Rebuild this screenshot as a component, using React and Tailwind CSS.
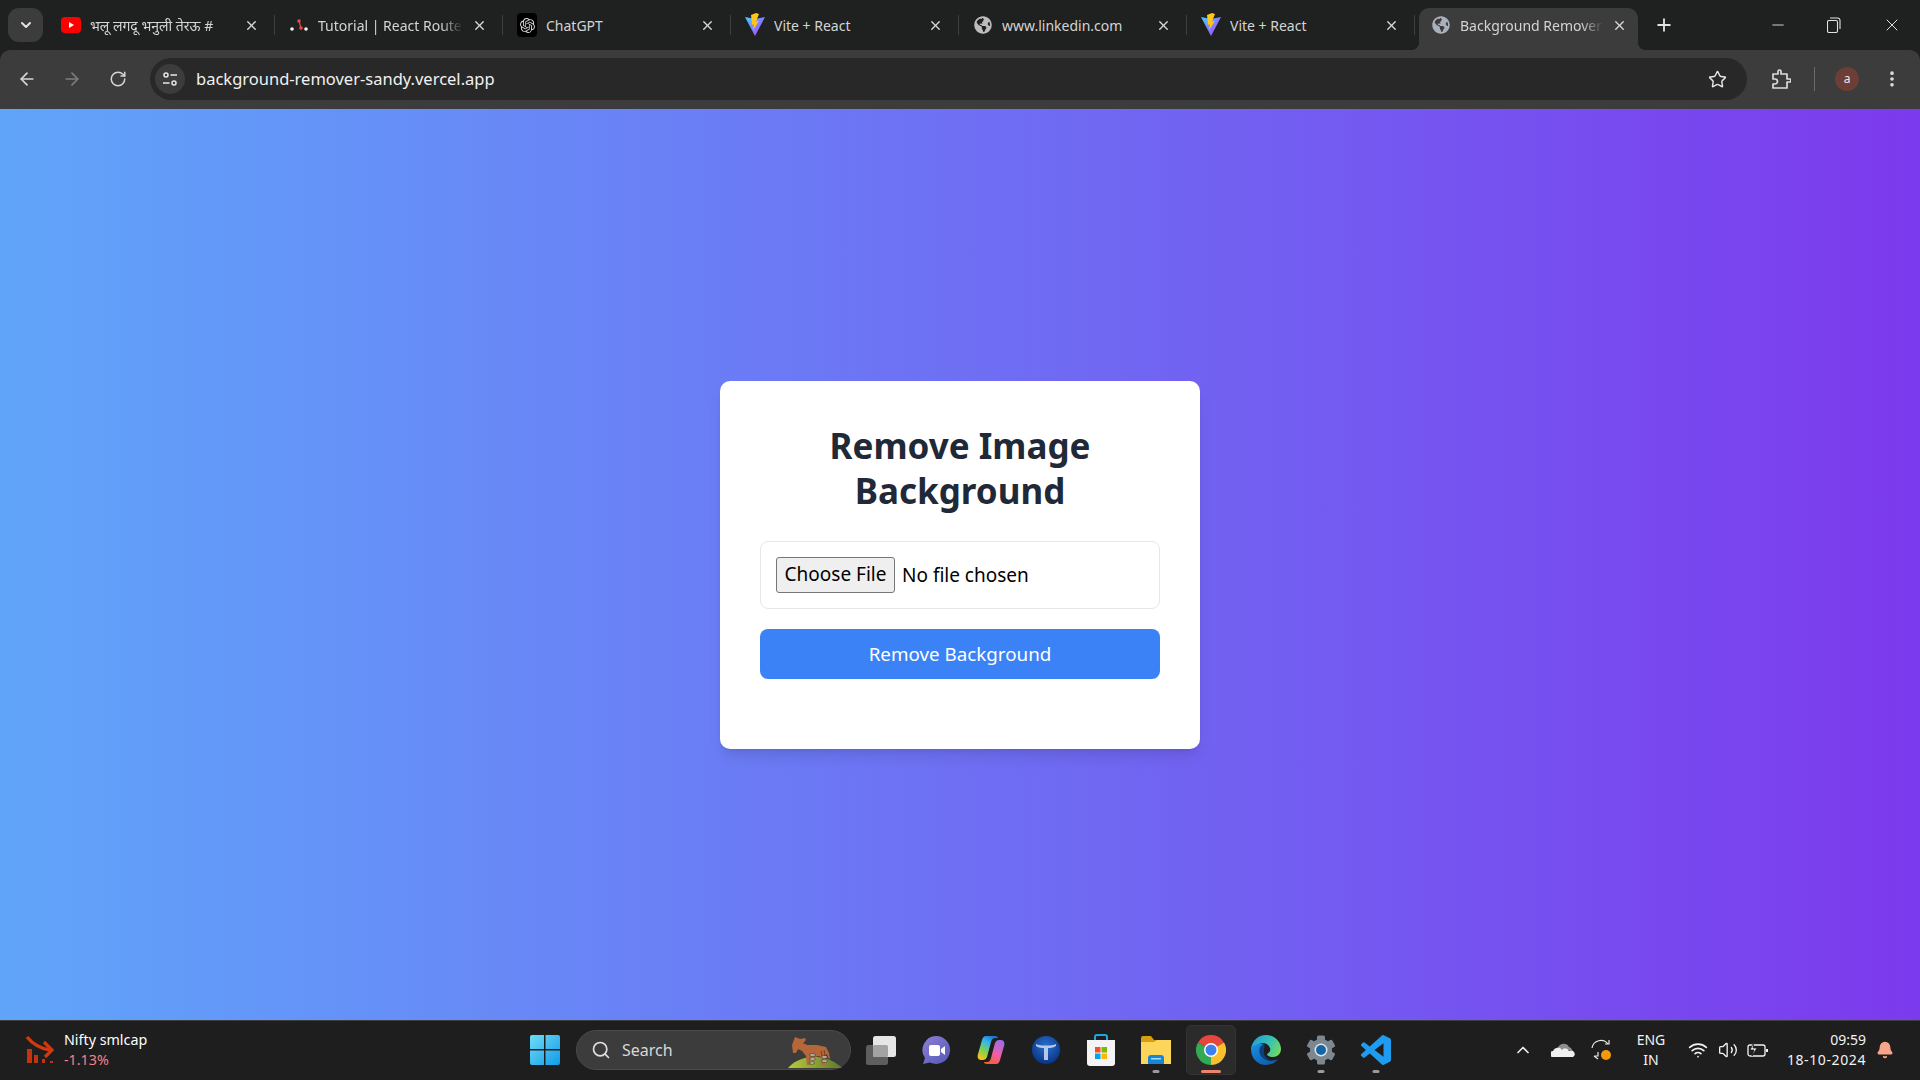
import { ArrowLeft, ArrowRight, RotateCw, Star, X, Plus, ChevronDown, ChevronUp, Minus, Search, Wifi, Volume2, Bell, EllipsisVertical } from 'lucide-react';
import { FaGlobeAmericas } from 'react-icons/fa';
import { SiOpenai } from 'react-icons/si';

const YoutubeIcon = () => (
  <svg width="20" height="16" viewBox="0 0 20 16">
    <rect width="20" height="16" rx="4" fill="#f00" />
    <path d="M8 5l5 3-5 3z" fill="#fff" />
  </svg>
);

const RouterIcon = () => (
  <svg width="18" height="12" viewBox="0 0 18 12">
    <circle cx="2" cy="10" r="1.8" fill="#f4f4f4" />
    <circle cx="16" cy="10" r="1.8" fill="#f4f4f4" />
    <circle cx="9" cy="2" r="1.8" fill="#e94949" />
    <circle cx="11" cy="9" r="1.8" fill="#e94949" />
    <path d="M9 2l2 7M7 10" stroke="#e94949" strokeWidth="1.2" />
  </svg>
);

const GptIcon = () => (
  <span className="w-[20px] h-[24px] rounded-[4px] bg-black flex items-center justify-center text-[#d8d8d8]">
    <SiOpenai size={15} />
  </span>
);

const ViteIcon = () => (
  <svg width="20" height="24" viewBox="0 0 20 24">
    <defs>
      <linearGradient id="viteBody" x1="0" y1="0" x2="1" y2="1">
        <stop offset="0" stopColor="#41d1ff" />
        <stop offset="1" stopColor="#bd34fe" />
      </linearGradient>
    </defs>
    <path d="M0 4l10 2 10-2-10 19z" fill="url(#viteBody)" />
    <path d="M11 0L6 2l1 10 2-1-1 6 6-9-3 .5L14 1z" fill="#ffc517" />
  </svg>
);

const Globe = ({ color = 'text-[#bdbdbd]' }) => (
  <span className={color}>
    <FaGlobeAmericas size={18} />
  </span>
);

const tabs = [
  { title: 'भलू लगदू भनुली तेरऊ #', icon: <YoutubeIcon />, fade: true },
  { title: 'Tutorial | React Router', icon: <RouterIcon />, fade: true },
  { title: 'ChatGPT', icon: <GptIcon /> },
  { title: 'Vite + React', icon: <ViteIcon /> },
  { title: 'www.linkedin.com', icon: <Globe /> },
  { title: 'Vite + React', icon: <ViteIcon /> },
  { title: 'Background Remover', icon: <Globe color="text-[#a9b1bb]" />, fade: true, active: true },
];

const Tab = ({ tab, last }) => (
  <>
    <div className={tab.active ? 'w-[227px] h-[50px] pt-[8px] px-[4px] shrink-0' : 'w-[227px] h-[50px] pt-[8px] shrink-0'}>
      <div className={tab.active
        ? 'relative h-[42px] flex items-center pb-[8px] pl-[12px] pr-[11px] bg-[#3c3c3c] rounded-t-[10px]'
        : 'h-[42px] flex items-center pb-[8px] pl-[14px] pr-[15px]'}>
        {tab.active && (
          <>
            <span className="absolute -left-[8px] bottom-0 w-[8px] h-[8px] bg-[radial-gradient(circle_at_0_0,transparent_8px,#3c3c3c_8px)]" />
            <span className="absolute -right-[8px] bottom-0 w-[8px] h-[8px] bg-[radial-gradient(circle_at_100%_0,transparent_8px,#3c3c3c_8px)]" />
          </>
        )}
        <span className="w-[20px] h-[24px] flex items-center justify-center shrink-0">{tab.icon}</span>
        <span className={tab.fade
          ? 'ml-[9px] flex-1 min-w-0 whitespace-nowrap overflow-hidden text-[14px] text-[#d4d4d4] [mask-image:linear-gradient(to_right,black_85%,transparent)]'
          : 'ml-[9px] flex-1 min-w-0 whitespace-nowrap overflow-hidden text-[14px] text-[#d4d4d4]'}>
          {tab.title}
        </span>
        <X size={15} strokeWidth={2.2} className="ml-[9px] text-[#d8d8d8] shrink-0" />
      </div>
    </div>
    {!last && <div className={tab.active ? 'w-[1px] shrink-0' : 'w-[1px] h-[20px] mt-[15px] bg-[#3d3f3e] shrink-0'} />}
  </>
);

const TabBar = () => (
  <div className="h-[50px] bg-[#1f2120] flex items-start">
    <div className="ml-[8px] mt-[8px] w-[35px] h-[34px] rounded-[11px] bg-[#3c3c3c] flex items-center justify-center shrink-0">
      <ChevronDown size={16} strokeWidth={3} className="text-[#e2e2e2]" />
    </div>
    <div className="ml-[4px] flex">
      {tabs.map((tab, i) => (
        <Tab key={i} tab={tab} last={i === tabs.length - 1} />
      ))}
    </div>
    <Plus size={20} strokeWidth={2.2} className="ml-[12px] mt-[15px] text-[#e2e2e2] shrink-0" />
    <Minus size={18} strokeWidth={1.2} className="ml-[95px] mt-[16px] text-[#e2e2e2] shrink-0" />
    <svg width="14" height="16" viewBox="0 0 14 16" className="ml-[40px] mt-[17px] shrink-0 text-[#e2e2e2]" fill="none" stroke="currentColor" strokeWidth="1.1">
      <rect x="0.5" y="3.5" width="10" height="12" rx="1.5" />
      <path d="M3 1h7.5A2.5 2.5 0 0 1 13 3.500V12" />
    </svg>
    <X size={20} strokeWidth={1.2} className="ml-[41px] mt-[15px] text-[#e2e2e2] shrink-0" />
  </div>
);

const Toolbar = () => (
  <div className="h-[59px] pb-[1px] bg-[#3c3c3c] rounded-t-[10px] flex items-center">
    <div className="ml-[9px] w-[36px] flex justify-center"><ArrowLeft size={20} strokeWidth={2} className="text-[#d6d6d6]" /></div>
    <div className="ml-[9px] w-[36px] flex justify-center"><ArrowRight size={20} strokeWidth={2} className="text-[#7d7d7d]" /></div>
    <div className="ml-[10px] w-[36px] flex justify-center"><RotateCw size={18} strokeWidth={2} className="text-[#d6d6d6]" /></div>
    <div className="ml-[14px] flex-1 h-[42px] rounded-full bg-[#282828] flex items-center pl-[5px] pr-[20px]">
      <span className="w-[30px] h-[30px] rounded-full bg-[#3c3c3c] flex items-center justify-center shrink-0">
        <svg width="16" height="16" viewBox="0 0 16 16" fill="none" stroke="#e6e6e6" strokeWidth="1.5">
          <circle cx="4" cy="4" r="2" />
          <path d="M8.500 4H15M1 12h6.500" />
          <circle cx="12" cy="12" r="2" />
        </svg>
      </span>
      <span className="ml-[11px] flex-1 text-[16.500px] text-[#f1f1f1] whitespace-nowrap">background-remover-sandy.vercel.app</span>
      <Star size={19} strokeWidth={1.8} className="text-[#e6e6e6] shrink-0" />
    </div>
    <svg width="20" height="20" viewBox="0 0 20 20" className="ml-[24px] shrink-0" fill="none" stroke="#dcdcdc" strokeWidth="1.7" strokeLinejoin="round">
      <path d="M2 5h5V2.500a1.500 1.500 0 0 1 3 0V5h6v5h2.500a1.500 1.500 0 0 1 0 3H16v6H2v-4h2a2.500 2.500 0 0 0 0-5H2z" />
    </svg>
    <div className="ml-[23px] w-[1px] h-[24px] bg-[#6a6a6a] shrink-0" />
    <div className="ml-[20px] w-[24px] h-[24px] rounded-full bg-[#6b3f35] text-[#f0e6e2] text-[12px] flex items-center justify-center shrink-0">a</div>
    <EllipsisVertical size={20} strokeWidth={2.4} className="ml-[23px] text-[#dcdcdc] shrink-0" />
    <div className="w-[18px] shrink-0" />
  </div>
);

const NiftyIcon = () => (
  <svg width="30" height="30" viewBox="0 0 30 30" className="shrink-0">
    <path d="M2 2Q11 13 25 15" fill="none" stroke="#cf3a10" strokeWidth="3.500" />
    <path d="M19 7l8 8-7 7" fill="none" stroke="#cf3a10" strokeWidth="3.200" />
    <rect x="2" y="14" width="5" height="14" fill="#c4320f" />
    <rect x="9" y="20" width="4" height="8" fill="#c4320f" />
    <rect x="17" y="24" width="3" height="4" fill="#c4320f" />
    <rect x="25" y="26" width="3" height="2" fill="#c4320f" />
  </svg>
);

const WinLogo = () => (
  <svg width="30" height="30" viewBox="0 0 30 30" className="shrink-0">
    <defs>
      <linearGradient id="winTile" x1="0" y1="0" x2="1" y2="1">
        <stop offset="0" stopColor="#6fdcf7" />
        <stop offset="1" stopColor="#119be8" />
      </linearGradient>
    </defs>
    <path d="M0 2a2 2 0 0 1 2-2h12v14H0zM15.500 0H28a2 2 0 0 1 2 2v12H15.500zM0 15.500h14V30H2a2 2 0 0 1-2-2zM15.500 15.500H30V28a2 2 0 0 1-2 2H15.500z" fill="url(#winTile)" />
  </svg>
);

const Okapi = () => (
  <svg width="54" height="38" viewBox="0 0 54 38" className="shrink-0">
    <defs>
      <linearGradient id="mound" x1="0" y1="0" x2="1" y2="0">
        <stop offset="0" stopColor="#b9c93c" />
        <stop offset="1" stopColor="#5d7a2c" />
      </linearGradient>
    </defs>
    <path d="M0 37C8 28 20 25 30 26c10 1 18 5 24 11z" fill="url(#mound)" />
    <path d="M7 6l5 2 5-1 1 2-3 3 4 2 10 0 9 2 3 6 1 6-2-1-1-4-3 3 1 8h-3l-2-9-8 1-2 2 0 6h-3l-1-9-4-5-4-2-2 4h-3l-1-8z" fill="#b5673a" />
    <path d="M22 23h5v2h-5zM22 27h5v2h-5zM22 31h4v2h-4zM34 25h5v2h-5zM34 29h5v2h-5zM33 20l1 5M36 19l1 6" fill="#e9dfd0" stroke="#3a2a22" strokeWidth="0.6" />
  </svg>
);

const TaskView = () => (
  <svg width="30" height="30" viewBox="0 0 30 30">
    <rect x="0" y="10" width="22" height="20" rx="2.500" fill="#5e5e5e" />
    <rect x="7" y="1" width="23" height="21" rx="2.500" fill="#e6e6e6" />
    <rect x="7" y="10" width="15" height="12" rx="1.500" fill="#a3a3a3" />
  </svg>
);

const MeetIcon = () => (
  <svg width="30" height="30" viewBox="0 0 30 30">
    <defs>
      <linearGradient id="meet" x1="0" y1="0" x2="1" y2="1">
        <stop offset="0" stopColor="#8f7fd6" />
        <stop offset="1" stopColor="#5158b4" />
      </linearGradient>
    </defs>
    <path d="M15 1a14 14 0 1 1-6 26.600L2 29l2-6A14 14 0 0 1 15 1z" fill="url(#meet)" />
    <rect x="8" y="10" width="11" height="11" rx="2" fill="#fff" />
    <path d="M20 14l4-3v9l-4-3z" fill="#fff" />
  </svg>
);

const CopilotIcon = () => (
  <svg width="28" height="28" viewBox="0 0 28 28">
    <defs>
      <linearGradient id="copA" x1="0.7" y1="0" x2="0.2" y2="1">
        <stop offset="0" stopColor="#1c78d8" />
        <stop offset="0.3" stopColor="#35b6e6" />
        <stop offset="0.65" stopColor="#7fd24f" />
        <stop offset="1" stopColor="#f9c21f" />
      </linearGradient>
      <linearGradient id="copB" x1="0.7" y1="0" x2="0.3" y2="1">
        <stop offset="0" stopColor="#9f6be8" />
        <stop offset="0.55" stopColor="#ee5fa8" />
        <stop offset="1" stopColor="#f4632f" />
      </linearGradient>
    </defs>
    <path d="M9 0h9c2 0 3 1 3 2h-3c-2 0-3 1-4 4L10 21c-1 2-2 3-4 3H4c-3 0-4-3-3-6L5 4c1-3 2-4 4-4z" fill="url(#copA)" />
    <path d="M19 28h-9c-2 0-3-1-3-2h3c2 0 3-1 4-4l4-15c1-2 2-3 4-3h2c3 0 4 3 3 6l-4 14c-1 3-2 4-4 4z" fill="url(#copB)" />
  </svg>
);

const TIcon = () => (
  <svg width="28" height="28" viewBox="0 0 28 28">
    <defs>
      <radialGradient id="tBall" cx="0.5" cy="0.35" r="0.7">
        <stop offset="0" stopColor="#2a6fcc" />
        <stop offset="1" stopColor="#072f80" />
      </radialGradient>
    </defs>
    <circle cx="14" cy="14" r="14" fill="url(#tBall)" />
    <path d="M4 8c4 2 16 2 20 0v2c-3 2-6 2-8 2v12h-4V12c-2 0-5 0-8-2z" fill="#cfdcf0" opacity="0.85" />
  </svg>
);

const StoreIcon = () => (
  <svg width="30" height="32" viewBox="0 0 30 32">
    <path d="M9 6V3a2 2 0 0 1 2-2h8a2 2 0 0 1 2 2v3" fill="none" stroke="#19a9e0" strokeWidth="2" />
    <path d="M1 6h28v23a3 3 0 0 1-3 3H4a3 3 0 0 1-3-3z" fill="#f4f4f4" />
    <rect x="9" y="13" width="5.500" height="5.500" fill="#f25022" />
    <rect x="15.500" y="13" width="5.500" height="5.500" fill="#7fba00" />
    <rect x="9" y="19.500" width="5.500" height="5.500" fill="#00a4ef" />
    <rect x="15.500" y="19.500" width="5.500" height="5.500" fill="#ffb900" />
  </svg>
);

const FilesIcon = () => (
  <svg width="30" height="28" viewBox="0 0 30 28">
    <path d="M0 2a2 2 0 0 1 2-2h8l3 4h15a2 2 0 0 1 2 2v4H0z" fill="#d69f10" />
    <path d="M0 6h13l3-2h14v24H0z" fill="#fbd65a" />
    <path d="M7 28v-6a3 3 0 0 1 3-3h10a3 3 0 0 1 3 3v6z" fill="#1487d8" />
    <rect x="10" y="22" width="10" height="1.500" fill="#a6dcf7" />
  </svg>
);

const ChromeIcon = () => (
  <svg width="30" height="30" viewBox="0 0 24 24">
    <path d="M12 12L1.600 6A12 12 0 0 1 22.400 6z" fill="#e8453c" />
    <path d="M12 12L22.400 6A12 12 0 0 1 12 24z" fill="#fbc02d" />
    <path d="M12 12L12 24A12 12 0 0 1 1.600 6z" fill="#34a853" />
    <circle cx="12" cy="12" r="5.600" fill="#fff" />
    <circle cx="12" cy="12" r="4.400" fill="#3f80ee" />
  </svg>
);

const EdgeIcon = () => (
  <svg width="32" height="32" viewBox="0 0 32 32">
    <defs>
      <linearGradient id="edgeTop" x1="0" y1="0.3" x2="1" y2="0.7">
        <stop offset="0" stopColor="#1f9fd8" />
        <stop offset="0.55" stopColor="#37c2b0" />
        <stop offset="1" stopColor="#76d85f" />
      </linearGradient>
      <linearGradient id="edgeBody" x1="0" y1="0" x2="0.8" y2="1">
        <stop offset="0" stopColor="#1c8fe0" />
        <stop offset="1" stopColor="#0c5aa8" />
      </linearGradient>
    </defs>
    <path d="M16 1C25 1 31 8 31 15c0 5-4 8-8 8-3 0-6-1-6-3 2-1 4-3 3-6-2-5-7-6-11-4-4 2-8 7-8 5C2 7 8 1 16 1z" fill="url(#edgeTop)" />
    <path d="M1 15c0 10 7 16 15 16 5 0 9-2 12-6-6 3-13 2-16-3-3-5-2-10 2-12C8 9 2 12 1 15z" fill="url(#edgeBody)" />
    <path d="M14 10c-5 2-6 8-3 12 3 5 11 6 17 3-4 2-8 2-10 0-3-2-5-5-4-8 0-3 1-5 0-7z" fill="#0a3f80" />
  </svg>
);

const GearIcon = () => (
  <svg width="30" height="30" viewBox="0 0 30 30">
    {[0, 60, 120, 180, 240, 300].map((a) => (
      <rect key={a} x="11" y="0.500" width="8" height="8" rx="1.500" fill="#7d8790" transform={`rotate(${a} 15 15)`} />
    ))}
    <circle cx="15" cy="15" r="11" fill="#7d8790" />
    <circle cx="15" cy="15" r="6.500" fill="#dfe5ea" />
    <circle cx="15" cy="15" r="5" fill="#1464a8" />
  </svg>
);

const VsCodeIcon = () => (
  <svg width="30" height="30" viewBox="0 0 24 24">
    <path fill="#1f9cf0" d="M23.150 2.587L18.210.21a1.494 1.494 0 0 0-1.705.29l-9.460 8.630-4.120-3.128a.999.999 0 0 0-1.276.057L.327 7.261A1 1 0 0 0 .326 8.740L3.899 12 .326 15.260a1 1 0 0 0 .001 1.479L1.650 17.940a.999.999 0 0 0 1.276.057l4.120-3.128 9.460 8.630a1.492 1.492 0 0 0 1.704.29l4.942-2.377A1.500 1.500 0 0 0 24 20.060V3.939a1.500 1.500 0 0 0-.85-1.352zm-5.146 14.861L10.826 12l7.178-5.448v10.896z" />
  </svg>
);

const taskIcons = [
  { icon: <TaskView /> },
  { icon: <MeetIcon /> },
  { icon: <CopilotIcon /> },
  { icon: <TIcon /> },
  { icon: <StoreIcon /> },
  { icon: <FilesIcon />, open: true },
  { icon: <ChromeIcon />, active: true },
  { icon: <EdgeIcon /> },
  { icon: <GearIcon />, open: true },
  { icon: <VsCodeIcon />, open: true },
];

const TaskIcon = ({ item }) => (
  <div className={item.active
    ? 'relative w-[50px] h-[50px] rounded-[5px] bg-[#2b2b2b] border border-[#333] flex items-center justify-center shrink-0'
    : 'relative w-[50px] h-[50px] flex items-center justify-center shrink-0'}>
    {item.icon}
    {item.open && <span className="absolute bottom-[2px] left-1/2 -translate-x-1/2 w-[7px] h-[3px] rounded-full bg-[#9a9a9a]" />}
    {item.active && <span className="absolute bottom-[1px] left-1/2 -translate-x-1/2 w-[20px] h-[3px] rounded-full bg-[#f0836c]" />}
  </div>
);

const Taskbar = () => (
  <div className="h-[60px] pb-[1px] bg-[#1e1e1e] border-t border-[#3d3d3d] flex items-center text-white shrink-0">
    <div className="w-[530px] pl-[25px] flex items-center shrink-0">
      <NiftyIcon />
      <div className="ml-[9px] text-[14.300px] leading-[20px]">
        <div>Nifty smlcap</div>
        <div className="text-[#f4808c]">-1.13%</div>
      </div>
    </div>
    <WinLogo />
    <div className="ml-[16px] w-[275px] h-[40px] rounded-full bg-[#3c3c3c] border border-[#4a4a4a] flex items-center pl-[14px] pr-[8px] shrink-0">
      <Search size={20} strokeWidth={2} className="text-[#e0e0e0] shrink-0" />
      <span className="ml-[11px] flex-1 text-[16px] text-[#d8d8d8]">Search</span>
      <Okapi />
    </div>
    <div className="ml-[5px] flex gap-[5px] shrink-0">
      {taskIcons.map((item, i) => (
        <TaskIcon key={i} item={item} />
      ))}
    </div>
    <div className="ml-auto flex items-center pr-[26px] shrink-0">
      <ChevronUp size={20} strokeWidth={2} className="text-[#ececec]" />
      <svg width="24" height="16" viewBox="0 0 24 16" className="ml-[18px]">
        <path d="M7 6a6 6 0 0 1 11-1 4 4 0 0 1 3 3H8z" fill="#8e8e8e" />
        <path d="M2 15a3 3 0 0 1 0-6 5 5 0 0 1 9-1 4 4 0 0 1 7 1 3 3 0 0 1 4 6z" fill="#efefef" />
      </svg>
      <svg width="24" height="24" viewBox="0 0 24 24" className="ml-[16px]" fill="none" stroke="#e8e8e8" strokeWidth="1.2">
        <path d="M1 10a9 9 0 0 1 16-4M18 2v4h-4M3 18l4 3M3 18h4v-4" />
        <circle cx="15" cy="17" r="5" fill="#f79a0a" stroke="none" />
      </svg>
      <div className="ml-[16px] w-[40px] text-center text-[14px] leading-[20px] text-[#f2f2f2]">
        <div>ENG</div>
        <div>IN</div>
      </div>
      <Wifi size={20} strokeWidth={2} className="ml-[17px] text-[#f2f2f2]" />
      <Volume2 size={20} strokeWidth={1.6} className="ml-[10px] text-[#f2f2f2]" />
      <svg width="22" height="16" viewBox="0 0 22 16" className="ml-[9px]" fill="none" stroke="#f2f2f2" strokeWidth="1.3">
        <rect x="1" y="3" width="17" height="11" rx="2" />
        <path d="M20 7v3" strokeWidth="2" />
        <path d="M7 0L3 8h4l-2 6 5-8H6z" fill="#f2f2f2" stroke="#1e1e1e" strokeWidth="0.8" />
      </svg>
      <div className="ml-[17px] w-[80px] text-right text-[14px] leading-[20px] text-[#f2f2f2] whitespace-nowrap">
        <div>09:59</div>
        <div className="tracking-[0.6px]">18-10-2024</div>
      </div>
      <Bell size={18} fill="#f8a68a" stroke="#f8a68a" className="ml-[10px]" />
    </div>
  </div>
);

const Card = () => (
  <div className="w-[480px] bg-white rounded-[10px] shadow-lg p-[40px]">
    <h1 className="pt-[2px] text-[35px] leading-[45px] font-bold text-[#1f2937] text-center mb-[28px]">
      Remove Image Background
    </h1>
    <form className="flex flex-col gap-[20px] mb-[30px]">
      <input
        type="file"
        className="w-full h-[68px] px-[15px] py-[15px] border border-[#e5e7eb] rounded-[8px] text-[19px] text-black file:mr-[7px] file:h-[36px] file:w-[119px] file:bg-[#efefef] file:border file:border-[#767676] file:rounded-[3px] file:text-[19px] file:text-black"
      />
      <button type="button" className="h-[50px] pt-[1px] bg-[#3b82f6] text-white text-[18.800px] rounded-[8px]">
        Remove Background
      </button>
    </form>
  </div>
);

const App = () => {
  return (
    <div className="w-full h-screen flex flex-col overflow-hidden bg-[#1f2120] font-['Noto_Sans','Noto_Sans_Devanagari',sans-serif]">
      <TabBar />
      <Toolbar />
      <main className="flex-1 min-h-0 flex items-center justify-center bg-linear-to-r/srgb from-[#60a5fa] to-[#7c3aed]">
        <Card />
      </main>
      <Taskbar />
    </div>
  );
};

export default App;
